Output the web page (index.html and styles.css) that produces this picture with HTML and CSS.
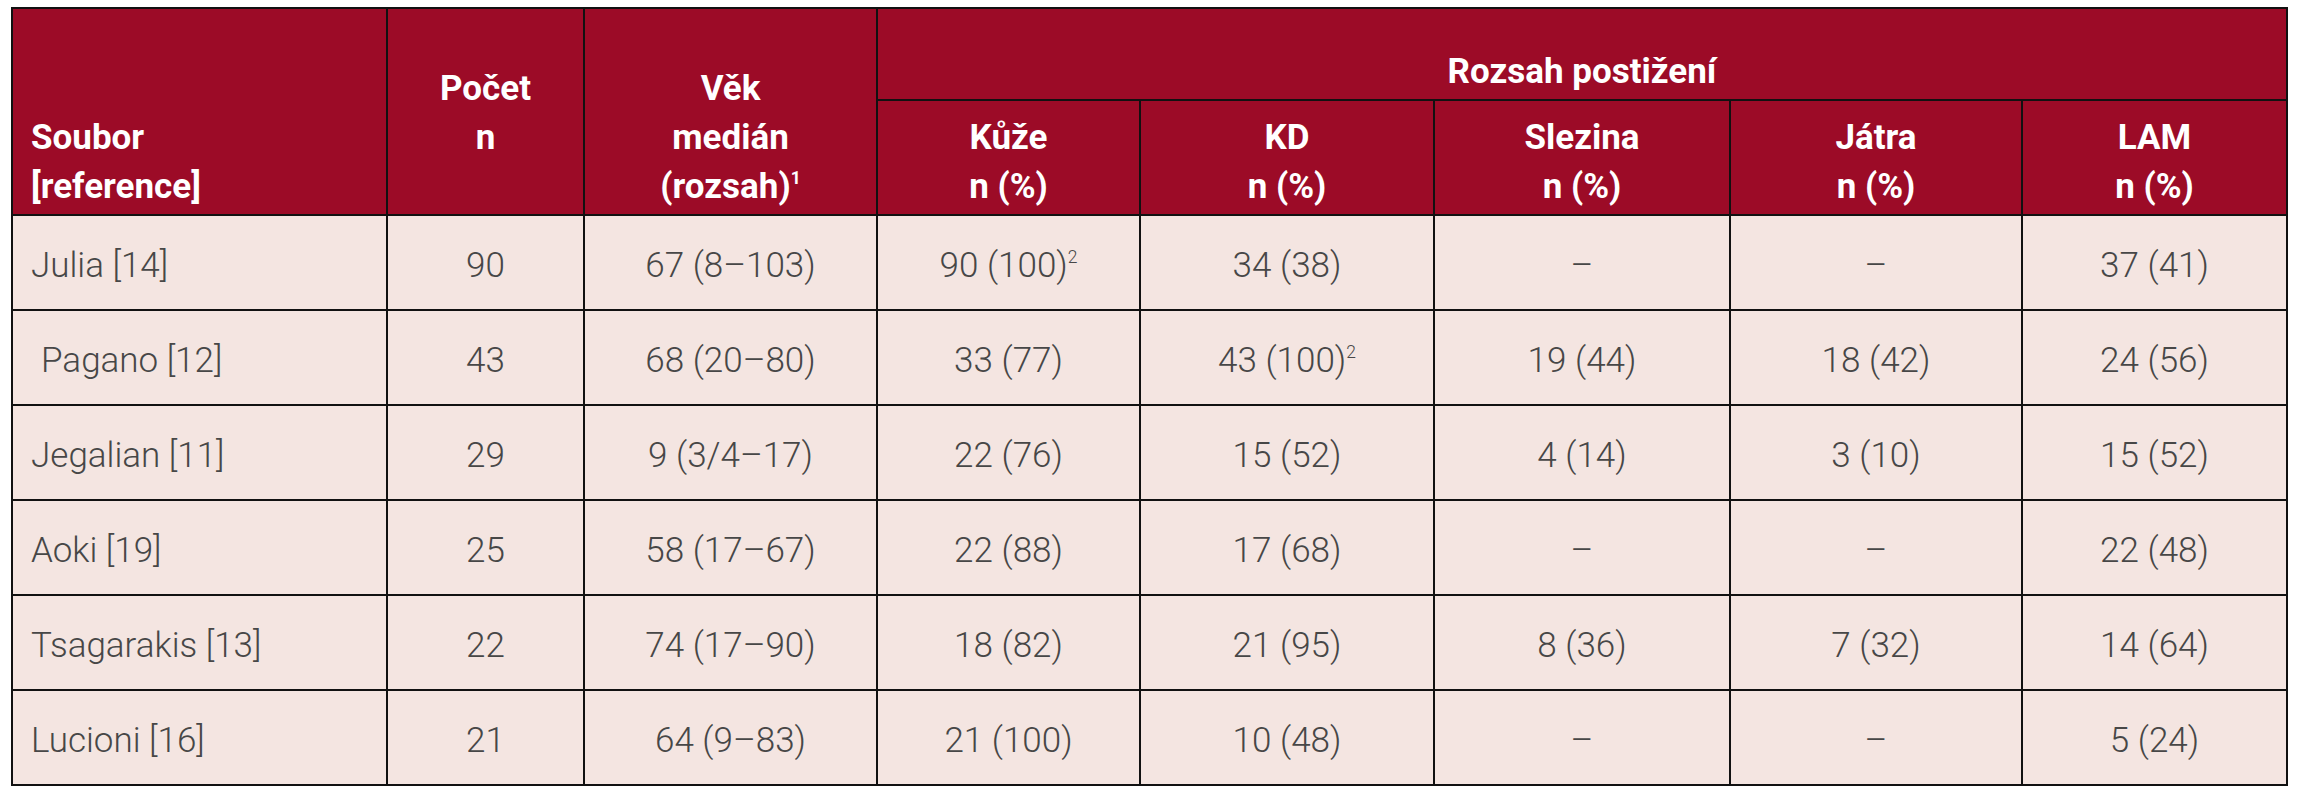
FILE: index.html
```html
<!DOCTYPE html>
<html lang="cs">
<head>
<meta charset="utf-8">
<title>Rozsah postižení</title>
<link rel="stylesheet" href="styles.css">
</head>
<body>
<table class="data">
  <colgroup>
    <col class="c-soubor">
    <col class="c-pocet">
    <col class="c-vek">
    <col class="c-kuze">
    <col class="c-kd">
    <col class="c-slez">
    <col class="c-jatra">
    <col class="c-lam">
  </colgroup>
  <thead>
    <tr class="hr1">
      <th rowspan="2" class="left">Soubor<br>[reference]</th>
      <th rowspan="2" class="pocet">Počet<br>n</th>
      <th rowspan="2">Věk<br>medián<br>(rozsah)<sup>1</sup></th>
      <th colspan="5" class="group">Rozsah postižení</th>
    </tr>
    <tr class="hr2">
      <th>Kůže<br>n (%)</th>
      <th>KD<br>n (%)</th>
      <th>Slezina<br>n (%)</th>
      <th>Játra<br>n (%)</th>
      <th>LAM<br>n (%)</th>
    </tr>
  </thead>
  <tbody>
    <tr>
      <td class="left">Julia [14]</td><td>90</td><td>67 (8–103)</td><td>90 (100)<sup>2</sup></td><td>34 (38)</td><td>–</td><td>–</td><td>37 (41)</td>
    </tr>
    <tr>
      <td class="left indent">Pagano [12]</td><td>43</td><td>68 (20–80)</td><td>33 (77)</td><td>43 (100)<sup>2</sup></td><td>19 (44)</td><td>18 (42)</td><td>24 (56)</td>
    </tr>
    <tr>
      <td class="left">Jegalian [11]</td><td>29</td><td>9 (3/4–17)</td><td>22 (76)</td><td>15 (52)</td><td>4 (14)</td><td>3 (10)</td><td>15 (52)</td>
    </tr>
    <tr>
      <td class="left">Aoki [19]</td><td>25</td><td>58 (17–67)</td><td>22 (88)</td><td>17 (68)</td><td>–</td><td>–</td><td>22 (48)</td>
    </tr>
    <tr>
      <td class="left">Tsagarakis [13]</td><td>22</td><td>74 (17–90)</td><td>18 (82)</td><td>21 (95)</td><td>8 (36)</td><td>7 (32)</td><td>14 (64)</td>
    </tr>
    <tr>
      <td class="left">Lucioni [16]</td><td>21</td><td>64 (9–83)</td><td>21 (100)</td><td>10 (48)</td><td>–</td><td>–</td><td>5 (24)</td>
    </tr>
  </tbody>
</table>
</body>
</html>
```
FILE: styles.css
```css
html, body {
  margin: 0;
  padding: 0;
  background: #ffffff;
}

.data {
  margin: 7px 0 0 11px;
  border-collapse: collapse;
  table-layout: fixed;
  width: 2275px;
  border: 2px solid #111;
  font-family: Roboto, "Liberation Sans", Arial, sans-serif;
  font-size: 35px;
}

.c-soubor { width: 375px; }
.c-pocet { width: 197px; }
.c-vek { width: 293px; }
.c-kuze { width: 263px; }
.c-kd { width: 294px; }
.c-slez { width: 296px; }
.c-jatra { width: 292px; }
.c-lam { width: 265px; }

.data th,
.data td {
  border: 2px solid #111;
}

.data th {
  background: #9c0b27;
  color: #ffffff;
  font-weight: 700;
  line-height: 49px;
  text-align: center;
  vertical-align: bottom;
  padding: 0 10px 3px;
}

.data th.left,
.data td.left {
  text-align: left;
  padding-left: 18px;
}

.data th.pocet {
  padding-bottom: 52px;
}

.hr1 th {
  height: 87px;
}

.hr2 th {
  height: 110px;
}

.data th sup,
.data td sup {
  font-size: 0.5em;
  line-height: 0;
  vertical-align: 0.8em;
}

.data td {
  background: #f4e5e1;
  color: #474747;
  font-weight: 300;
  line-height: 40px;
  text-align: center;
  vertical-align: middle;
  height: 87px;
  padding: 6px 10px 0;
}

.data td.indent {
  padding-left: 28px;
}
```
